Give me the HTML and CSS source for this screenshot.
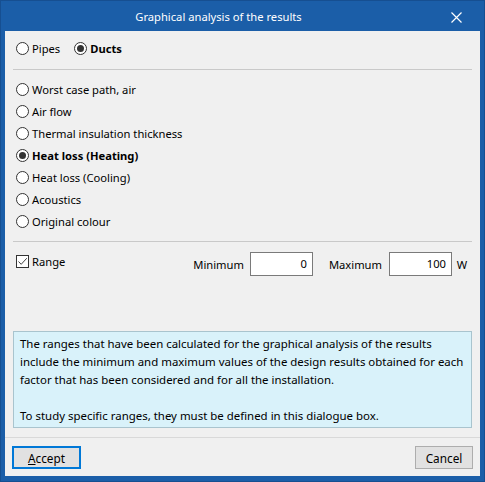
FILE: index.html
```html
<!DOCTYPE html>
<html>
<head>
<meta charset="utf-8">
<link rel="stylesheet" href="styles.css">
</head>
<body>
<div class="window">
  <div class="titlebar">
    <div class="title">Graphical analysis of the results</div>
    <div class="close">
      <svg width="11" height="11" viewBox="0 0 11 11"><path d="M0.5 0.5 L10.5 10.5 M10.5 0.5 L0.5 10.5" stroke="#ffffff" stroke-width="1.2" fill="none"/></svg>
    </div>
  </div>
  <div class="content">
    <div class="type-row">
      <label class="opt"><span class="radio"></span><span>Pipes</span></label>
      <label class="opt bold"><span class="radio checked"></span><span>Ducts</span></label>
    </div>
    <div class="sep"></div>
    <div class="list">
      <label class="opt"><span class="radio"></span><span>Worst case path, air</span></label>
      <label class="opt"><span class="radio"></span><span>Air flow</span></label>
      <label class="opt"><span class="radio"></span><span>Thermal insulation thickness</span></label>
      <label class="opt bold"><span class="radio checked"></span><span>Heat loss (Heating)</span></label>
      <label class="opt"><span class="radio"></span><span>Heat loss (Cooling)</span></label>
      <label class="opt"><span class="radio"></span><span>Acoustics</span></label>
      <label class="opt"><span class="radio"></span><span>Original colour</span></label>
    </div>
    <div class="sep sep2"></div>
    <div class="range-row">
      <label class="opt check-opt">
        <span class="checkbox"><svg width="11" height="11" viewBox="0 0 11 11"><path d="M1.5 5.5 L4.2 8.3 L9.8 2.2" stroke="#444" stroke-width="1" fill="none"/></svg></span>
        <span>Range</span>
      </label>
      <div class="fields">
        <span class="flabel">Minimum</span>
        <span class="field">0</span>
        <span class="flabel flabel2">Maximum</span>
        <span class="field">100</span>
        <span class="unit">W</span>
      </div>
    </div>
    <div class="info">
      <p>The ranges that have been calculated for the graphical analysis of the results<br>include the minimum and maximum values of the design results obtained for each<br>factor that has been considered and for all the installation.</p>
      <p class="gap">To study specific ranges, they must be defined in this dialogue box.</p>
    </div>
    <div class="footer">
      <button class="btn primary"><u>A</u>ccept</button>
      <button class="btn">Cancel</button>
    </div>
  </div>
</div>
</body>
</html>
```

FILE: styles.css
```css
html, body {
  margin: 0;
  padding: 0;
}
body {
  width: 485px;
  height: 482px;
  overflow: hidden;
  font-family: "Noto Sans", "Open Sans", sans-serif;
  font-size: 11.2px;
  color: #000;
}
.window {
  width: 485px;
  height: 482px;
  box-sizing: border-box;
  border: 1px solid #164f91;
  background: #1b5ea8;
  padding: 0 4px 5px 4px;
  display: flex;
  flex-direction: column;
}
.titlebar {
  height: 30px;
  display: flex;
  align-items: center;
  color: #fff;
}
.title {
  flex: 1;
  text-align: center;
  padding-top: 1px;
}
.close {
  width: 48px;
  display: flex;
  justify-content: center;
  padding-top: 2px;
}
.content {
  flex: 1;
  background: #f0f0f0;
  display: flex;
  flex-direction: column;
}
.type-row {
  display: flex;
  gap: 14px;
  padding: 6px 0 0 11px;
}
.opt {
  display: flex;
  align-items: center;
  height: 22px;
  gap: 3px;
  white-space: nowrap;
}
.bold {
  font-weight: bold;
}
.radio {
  width: 13px;
  height: 13px;
  box-sizing: border-box;
  border: 1px solid #333;
  border-radius: 50%;
  background: #fff;
  display: flex;
  align-items: center;
  justify-content: center;
  flex: none;
}
.radio.checked::after {
  content: "";
  width: 7px;
  height: 7px;
  border-radius: 50%;
  background: #333;
}
.sep {
  height: 1px;
  background: #c9c9c9;
  margin: 10px 8px 0 8px;
}
.list {
  display: flex;
  flex-direction: column;
  padding: 8px 0 0 11px;
}
.sep2 {
  margin-top: 9px;
}
.range-row {
  display: flex;
  justify-content: space-between;
  padding: 10px 11px 0 11px;
}
.check-opt {
  height: 18px;
}
.checkbox {
  width: 13px;
  height: 13px;
  box-sizing: border-box;
  border: 1px solid #333;
  background: #fff;
  display: flex;
  align-items: center;
  justify-content: center;
  flex: none;
}
.checkbox svg {
  display: block;
}
.fields {
  display: flex;
  align-items: center;
}
.flabel {
  margin-right: 6px;
}
.flabel2 {
  margin-left: 16px;
  margin-right: 7px;
}
.field {
  width: 63px;
  height: 24px;
  box-sizing: border-box;
  border: 1px solid #7a7a7a;
  background: #fff;
  text-align: right;
  padding-right: 5px;
  line-height: 22px;
}
.unit {
  width: 14px;
  margin-left: 3px;
  text-align: center;
}
.info {
  margin: 55px 8px 0 8px;
  border: 1px solid #a9c4ce;
  background: #d9f2fa;
  padding: 3px 6px 2px 6px;
  line-height: 18px;
  font-size: 11.45px;
  white-space: nowrap;
}
.info p {
  margin: 0;
}
.info .gap {
  margin-top: 18px;
}
.footer {
  margin-top: 9px;
  border-top: 1px solid #d9d9d9;
  padding: 8px 7px 0 7px;
  display: flex;
  justify-content: space-between;
}
.btn {
  height: 23px;
  width: 58px;
  box-sizing: border-box;
  border: 1px solid #adadad;
  background: #e1e1e1;
  font-family: inherit;
  font-size: 11.8px;
  color: #000;
  padding: 0;
}
.btn.primary {
  width: 69px;
  border: 2px solid #0078d7;
}
.btn u {
  text-decoration: underline;
}
```
